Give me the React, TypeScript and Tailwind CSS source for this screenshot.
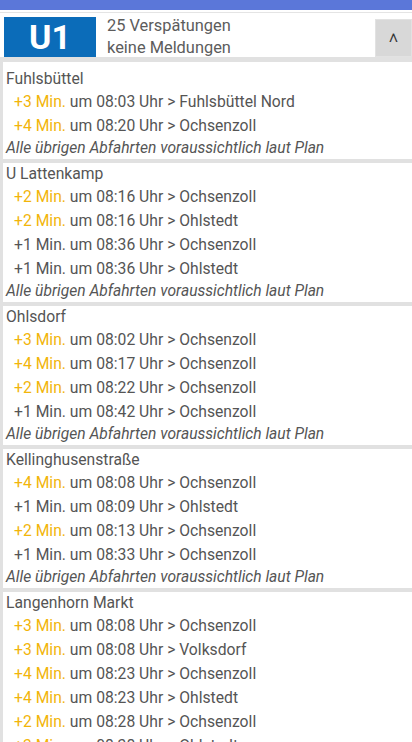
const sections: { name: string; rows: [number, string, string][] }[] = [
  {
    name: "Fuhlsbüttel",
    rows: [
      [3, "08:03", "Fuhlsbüttel Nord"],
      [4, "08:20", "Ochsenzoll"],
    ],
  },
  {
    name: "U Lattenkamp",
    rows: [
      [2, "08:16", "Ochsenzoll"],
      [2, "08:16", "Ohlstedt"],
      [1, "08:36", "Ochsenzoll"],
      [1, "08:36", "Ohlstedt"],
    ],
  },
  {
    name: "Ohlsdorf",
    rows: [
      [3, "08:02", "Ochsenzoll"],
      [4, "08:17", "Ochsenzoll"],
      [2, "08:22", "Ochsenzoll"],
      [1, "08:42", "Ochsenzoll"],
    ],
  },
  {
    name: "Kellinghusenstraße",
    rows: [
      [4, "08:08", "Ochsenzoll"],
      [1, "08:09", "Ohlstedt"],
      [2, "08:13", "Ochsenzoll"],
      [1, "08:33", "Ochsenzoll"],
    ],
  },
  {
    name: "Langenhorn Markt",
    rows: [
      [3, "08:08", "Ochsenzoll"],
      [3, "08:08", "Volksdorf"],
      [4, "08:23", "Ochsenzoll"],
      [4, "08:23", "Ohlstedt"],
      [2, "08:28", "Ochsenzoll"],
      [3, "08:38", "Ohlstedt"],
      [1, "08:43", "Ochsenzoll"],
    ],
  },
];

function Station({ name, rows, first }: { name: string; rows: [number, string, string][]; first?: boolean }) {
  return (
    <div className={`ml-[3px] bg-white ${first ? "pt-[6px]" : ""}`}>
      <div className="pl-[3px] text-[15.7px] leading-[22px] text-[#555]">{name}</div>
      {rows.map(([d, t, dest], i) => (
        <div key={i} className="pl-[11px] text-[15.7px] leading-[24px] text-[#555]">
          <span className={d > 1 ? "text-[#f2b50a]" : ""}>+{d} Min.</span> um {t} Uhr &gt; {dest}
        </div>
      ))}
      <div className="pl-[3px] text-[15.6px] italic leading-[21px] text-[#555]">
        Alle übrigen Abfahrten voraussichtlich laut Plan
      </div>
    </div>
  );
}

export default function App() {
  return (
    <div className="h-[742px] w-[412px] overflow-hidden bg-white font-['Roboto','Noto_Sans',sans-serif]">
      <div className="h-[10px] bg-[#5b77d9]" />
      <div className="mt-[2px] h-px bg-[#e4e4e4]" />
      <div className="flex h-[44px] items-start pt-[4px]">
        <div className="ml-[4px] flex h-[40px] w-[92px] items-center justify-center bg-[#0b6cb9] text-[34px] font-bold leading-none text-white">
          U1
        </div>
        <div className="ml-[11px] flex-1 text-[16.4px] leading-[22px] text-[#5c5c5c]">
          <div className="-mt-[2px]">25 Verspätungen</div>
          <div>keine Meldungen</div>
        </div>
        <div className="mt-[2px] flex h-[38px] w-[37px] justify-center border border-[#e2e2e2] bg-[#d8d8d8] pt-[11px] text-[24px] font-light leading-[24px] text-[#333]">
          ^
        </div>
      </div>
      <div className="flex flex-col gap-[4px] border-t-[5px] border-[#e1e1e1] bg-[#e1e1e1]">
        {sections.map((s, i) => (
          <Station key={s.name} name={s.name} rows={s.rows} first={i === 0} />
        ))}
      </div>
    </div>
  );
}
